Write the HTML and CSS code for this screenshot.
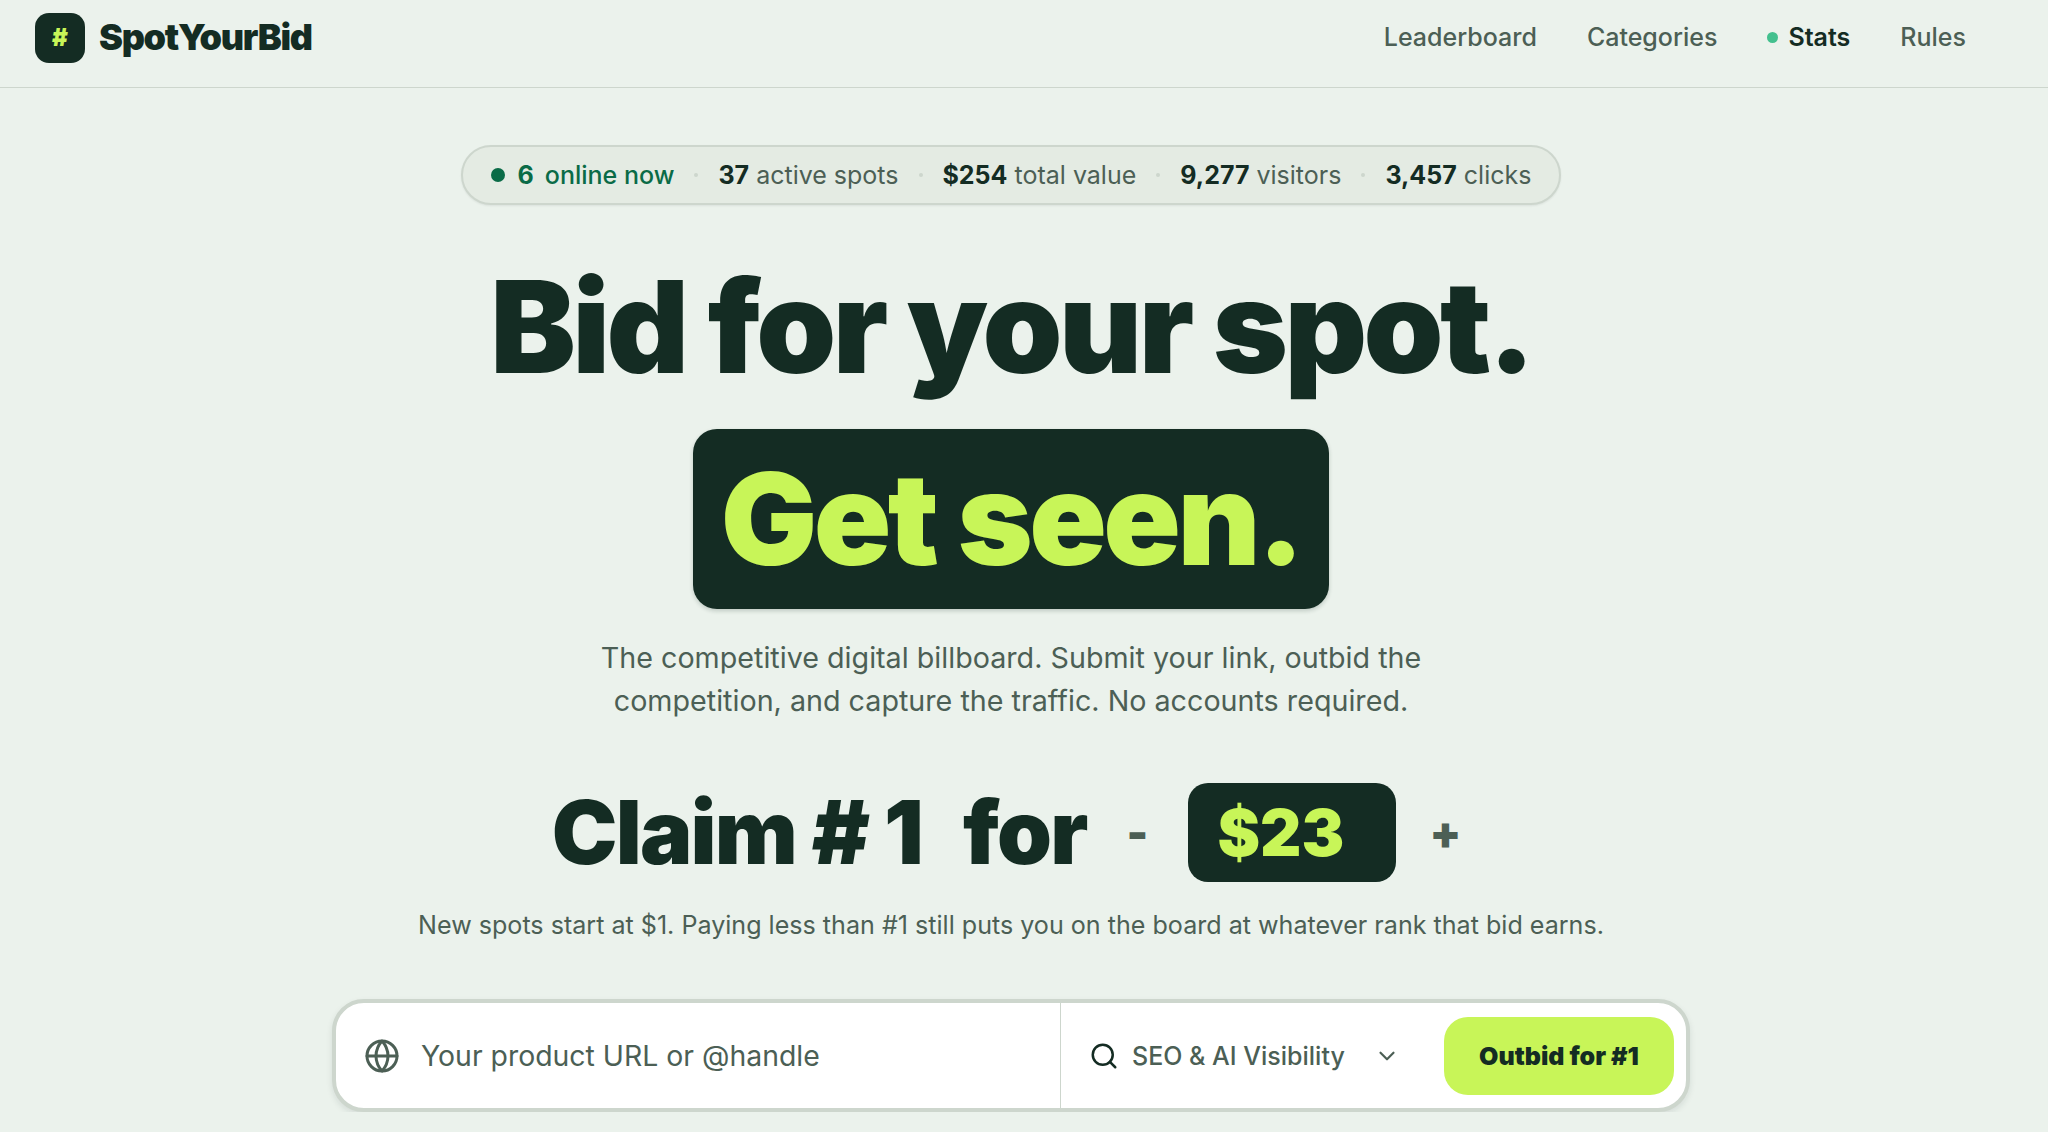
FILE: index.html
```html
<!DOCTYPE html>
<html>

<head>
    <meta name="viewport" content="width=device-width, initial-scale=1.0">
    <title>SpotYourBid</title>
    <link rel="stylesheet" href="styles.css">
</head>

<body>
    <header class="topbar">
        <a class="brand" href="#">
            <span class="brand-mark">#</span>
            <span class="brand-name">SpotYourBid</span>
        </a>
        <nav class="nav">
            <a class="nav-link" href="#">Leaderboard</a>
            <a class="nav-link" href="#">Categories</a>
            <a class="nav-link nav-active" href="#"><span class="nav-dot"></span>Stats</a>
            <a class="nav-link" href="#">Rules</a>
        </nav>
    </header>
    <main class="hero">
        <div class="stats-pill">
            <span class="stat stat-online"><span class="online-dot"></span><b class="online-count">6</b> online now</span>
            <span class="stat-sep"></span>
            <span class="stat"><b>37</b> active spots</span>
            <span class="stat-sep"></span>
            <span class="stat"><b>$254</b> total value</span>
            <span class="stat-sep"></span>
            <span class="stat"><b>9,277</b> visitors</span>
            <span class="stat-sep"></span>
            <span class="stat"><b>3,457</b> clicks</span>
        </div>
        <h1 class="headline">Bid for your spot.</h1>
        <div class="headline-box">Get seen.</div>
        <p class="lead">The competitive digital billboard. Submit your link, outbid the<br>competition, and capture the traffic. No accounts required.</p>
        <div class="claim-row">
            <span class="claim-text">Claim # 1</span>
            <span class="claim-text claim-for">for</span>
            <button class="step-btn step-minus">-</button>
            <div class="price-box">$23</div>
            <button class="step-btn step-plus">+</button>
        </div>
        <p class="note">New spots start at $1. Paying less than #1 still puts you on the board at whatever rank that bid earns.</p>
        <form class="bid-form">
            <div class="url-field">
                <svg class="globe-icon" viewBox="0 0 24 24" fill="none" stroke="currentColor" stroke-width="2" stroke-linecap="round" stroke-linejoin="round">
                    <circle cx="12" cy="12" r="10"></circle>
                    <path d="M2 12h20"></path>
                    <path d="M12 2a15 15 0 0 1 4 10 15 15 0 0 1-4 10 15 15 0 0 1-4-10 15 15 0 0 1 4-10z"></path>
                </svg>
                <input class="url-input" placeholder="Your product URL or @handle">
            </div>
            <div class="category-field">
                <svg class="search-icon" viewBox="0 0 24 24" fill="none" stroke="currentColor" stroke-width="2" stroke-linecap="round" stroke-linejoin="round">
                    <circle cx="11" cy="11" r="8"></circle>
                    <path d="m21 21-4.3-4.3"></path>
                </svg>
                <span class="category-name">SEO &amp; AI Visibility</span>
                <svg class="chevron-icon" viewBox="0 0 24 24" fill="none" stroke="currentColor" stroke-width="2" stroke-linecap="round" stroke-linejoin="round">
                    <path d="m6 9 6 6 6-6"></path>
                </svg>
            </div>
            <button class="bid-btn" type="button">Outbid for #1</button>
        </form>
    </main>
</body>

</html>
```

FILE: styles.css
```css
html {
    font-family: Inter, "Liberation Sans", sans-serif;
}

body {
    margin: 0;
    background-color: #ebf2ec;
    color: #142c23;
}

.topbar {
    display: flex;
    justify-content: space-between;
    align-items: center;
    height: 87px;
    padding: 0 82px 0 35px;
    border-bottom: 1px solid #cdd6cd;
}

.brand {
    display: flex;
    align-items: center;
    gap: 14px;
    margin-top: -12px;
    text-decoration: none;
    color: #142c23;
}

.brand-mark {
    display: flex;
    justify-content: center;
    align-items: center;
    width: 50px;
    height: 50px;
    border-radius: 14px;
    background-color: #142c23;
    color: #c8f558;
    font-size: 24px;
    font-weight: 900;
}

.brand-name {
    font-size: 36px;
    font-weight: 900;
    letter-spacing: -1.3px;
    margin-top: -2px;
}

.nav {
    display: flex;
    align-items: center;
    gap: 50px;
    margin-top: -13px;
}

.nav-link {
    display: flex;
    align-items: center;
    font-size: 25px;
    font-weight: 500;
    color: #4c5f55;
    text-decoration: none;
}

.nav-active {
    color: #142c23;
    font-weight: 600;
}

.nav-dot {
    width: 11px;
    height: 11px;
    margin-right: 10px;
    border-radius: 50%;
    background-color: #43c08e;
}

.hero {
    display: flex;
    flex-direction: column;
    align-items: center;
    padding-top: 57px;
    padding-right: 26px;
}

.stats-pill {
    display: flex;
    align-items: center;
    gap: 20px;
    height: 56px;
    padding: 0 28px;
    border: 2px solid #cdd6cd;
    border-radius: 30px;
    background-color: #e4ebe3;
    font-size: 25px;
    color: #4c5f55;
    box-shadow: 0 1px 2px rgba(20, 44, 35, 0.08);
}

.stat b {
    color: #142c23;
    font-weight: 700;
}

.stat-online {
    display: flex;
    align-items: center;
    color: #0a6b47;
    font-weight: 500;
}

.stat-online b.online-count {
    margin-right: 11px;
    color: #0a6b47;
}

.online-dot {
    width: 14px;
    height: 14px;
    margin-right: 13px;
    border-radius: 50%;
    background-color: #0a6b47;
}

.stat-sep {
    width: 4px;
    height: 4px;
    border-radius: 50%;
    background-color: #cdd6cd;
}

.headline {
    margin: 52px 0 0;
    font-size: 128px;
    line-height: 140px;
    font-weight: 900;
    letter-spacing: -3.5px;
}

.headline-box {
    margin-top: 32px;
    padding: 0 28px 0 28px;
    height: 180px;
    line-height: 180px;
    border-radius: 24px;
    background-color: #142c23;
    color: #c8f558;
    font-size: 128px;
    font-weight: 900;
    letter-spacing: -3.5px;
    box-shadow: 0 2px 4px rgba(20, 44, 35, 0.2);
}

.lead {
    margin: 27px 0 0;
    font-size: 28.7px;
    line-height: 43px;
    text-align: center;
    color: #4c5f55;
}

.claim-row {
    display: flex;
    align-items: center;
    margin-top: 57px;
    padding-right: 9px;
}

.claim-text {
    font-size: 88px;
    font-weight: 900;
    letter-spacing: -1.8px;
}

.claim-for {
    margin-left: 41px;
}

.step-btn {
    padding: 0;
    border: none;
    background: none;
    font-family: inherit;
    font-size: 46px;
    font-weight: 900;
    color: #4c5f55;
}

.step-minus {
    margin-left: 40px;
}

.price-box {
    width: 208px;
    height: 99px;
    margin-left: 40px;
    padding-left: 29px;
    box-sizing: border-box;
    border-radius: 20px;
    background-color: #142c23;
    color: #c8f558;
    font-size: 64px;
    font-weight: 900;
    line-height: 99px;
}

.step-plus {
    margin-left: 33px;
}

.note {
    margin: 22px 0 0;
    font-size: 25.1px;
    line-height: 36px;
    color: #4c5f55;
}

.bid-form {
    display: flex;
    align-items: center;
    width: 1358px;
    height: 113px;
    margin-top: 56px;
    box-sizing: border-box;
    border: 4px solid #cdd6cd;
    border-radius: 32px;
    background-color: #fff;
    box-shadow: 0 3px 6px rgba(20, 44, 35, 0.1);
}

.url-field {
    display: flex;
    align-items: center;
    align-self: stretch;
    width: 725px;
    padding-left: 28px;
    box-sizing: border-box;
    border-right: 1px solid #cdd6cd;
    color: #4c5f55;
}

.globe-icon {
    width: 36px;
    height: 36px;
    flex: none;
}

.url-input {
    flex: 1;
    min-width: 0;
    margin-left: 19px;
    border: none;
    outline: none;
    background: none;
    font-family: inherit;
    font-size: 28.4px;
}

.url-input::placeholder {
    color: #4c5f55;
    opacity: 1;
}

.category-field {
    display: flex;
    align-items: center;
    flex: 1;
    padding-left: 28px;
}

.search-icon {
    width: 30px;
    height: 30px;
    flex: none;
    color: #142c23;
}

.category-name {
    margin-left: 13px;
    font-size: 25px;
    font-weight: 500;
    color: #4c5f55;
}

.chevron-icon {
    width: 26px;
    height: 26px;
    margin-left: 29px;
    color: #4c5f55;
}

.bid-btn {
    width: 230px;
    height: 78px;
    margin-right: 12px;
    border: none;
    border-radius: 24px;
    background-color: #c8f558;
    color: #142c23;
    font-family: inherit;
    font-size: 25px;
    font-weight: 900;
}
```
